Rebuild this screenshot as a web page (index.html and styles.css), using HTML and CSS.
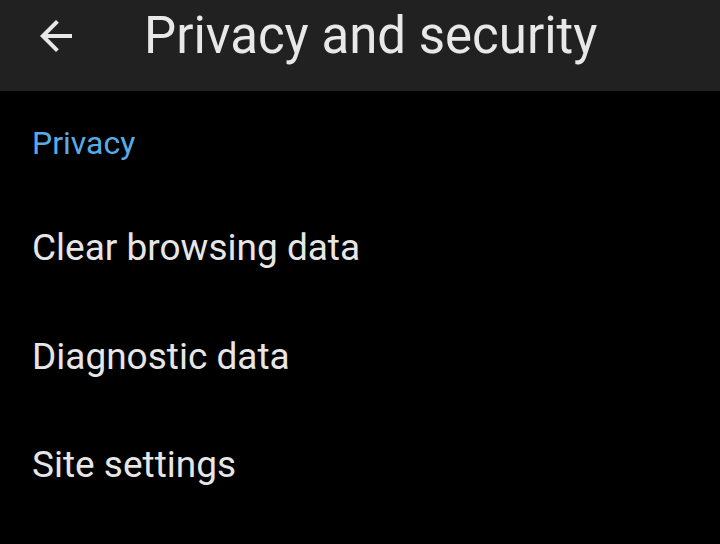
FILE: index.html
```html
<!DOCTYPE html>
<html lang="en">

<head>
    <meta charset="UTF-8">
    <meta name="viewport" content="width=device-width, initial-scale=1.0">
    <title>Privacy and security</title>
    <link rel="stylesheet" href="styles.css">
</head>

<body>
    <div class="toolbar">
        <button class="back" aria-label="Back">
            <svg viewBox="0 0 24 24" width="48" height="48">
                <path fill="currentColor" d="M20 11H7.83l5.59-5.59L12 4l-8 8 8 8 1.41-1.41L7.83 13H20v-2z" />
            </svg>
        </button>
        <h1 class="title">Privacy and security</h1>
    </div>

    <div class="settings">
        <h2 class="section-title">Privacy</h2>
        <div class="item">Clear browsing data</div>
        <div class="item">Diagnostic data</div>
        <div class="item">Site settings</div>
    </div>
</body>

</html>
```

FILE: styles.css
```css
body {
    margin: 0;
    font-family: Roboto, "Noto Sans", sans-serif;
    background-color: #000;
    color: #e8e8e8;
}

.toolbar {
    display: flex;
    align-items: flex-start;
    height: 91px;
    padding-top: 12px;
    box-sizing: border-box;
    background-color: #212121;
}

.back {
    width: 48px;
    height: 48px;
    margin-left: 32px;
    padding: 0;
    border: none;
    background: none;
    color: #e8e8e8;
}

.back svg {
    display: block;
}

.title {
    margin: 0 0 0 64px;
    font-size: 51px;
    font-weight: 400;
    line-height: 48px;
    color: #e8e8e8;
}

.settings {
    padding: 34px 0 0 32px;
}

.section-title {
    margin: 0 0 33px;
    font-size: 32px;
    font-weight: 400;
    line-height: 36px;
    color: #5aaae8;
}

.item {
    height: 108.5px;
    line-height: 108.5px;
    font-size: 37px;
    color: #e6e6e6;
}
```
